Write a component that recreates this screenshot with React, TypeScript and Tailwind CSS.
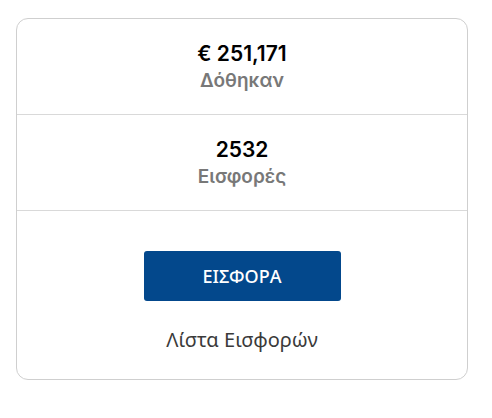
import React from "react";

const stats = [
  { value: "€ 251,171", label: "Δόθηκαν" },
  { value: "2532", label: "Εισφορές" },
];

function StatRow({ value, label }: { value: string; label: string }) {
  return (
    <div className="flex flex-col items-center justify-center h-[96px] pt-[3px] border-b border-[#d9d9d9]">
      <p className="text-[21px] font-semibold leading-[26px] text-black font-['Inter','Noto_Sans',sans-serif]">{value}</p>
      <p className="text-[19px] font-semibold leading-[28px] text-[#787878] font-['Inter','Noto_Sans',sans-serif]">{label}</p>
    </div>
  );
}

export default function App() {
  return (
    <div className="w-[492px] h-[418px] bg-white pt-[18px] px-[16px]">
      <div className="w-[452px] border border-[#cfcfcf] rounded-[12px] overflow-hidden">
        {stats.map((s) => (
          <StatRow key={s.label} value={s.value} label={s.label} />
        ))}
        <div className="flex flex-col items-center pt-[40px] pb-[24px]">
          <button className="w-[197px] h-[50px] rounded-[3px] bg-[#03488c] text-white text-[18px] font-medium font-['Noto_Sans',sans-serif]">
            ΕΙΣΦΟΡΑ
          </button>
          <a className="mt-[24px] text-[20px] leading-[30px] text-[#3a3a3a] font-['Noto_Sans',sans-serif]">Λίστα Εισφορών</a>
        </div>
      </div>
    </div>
  );
}
